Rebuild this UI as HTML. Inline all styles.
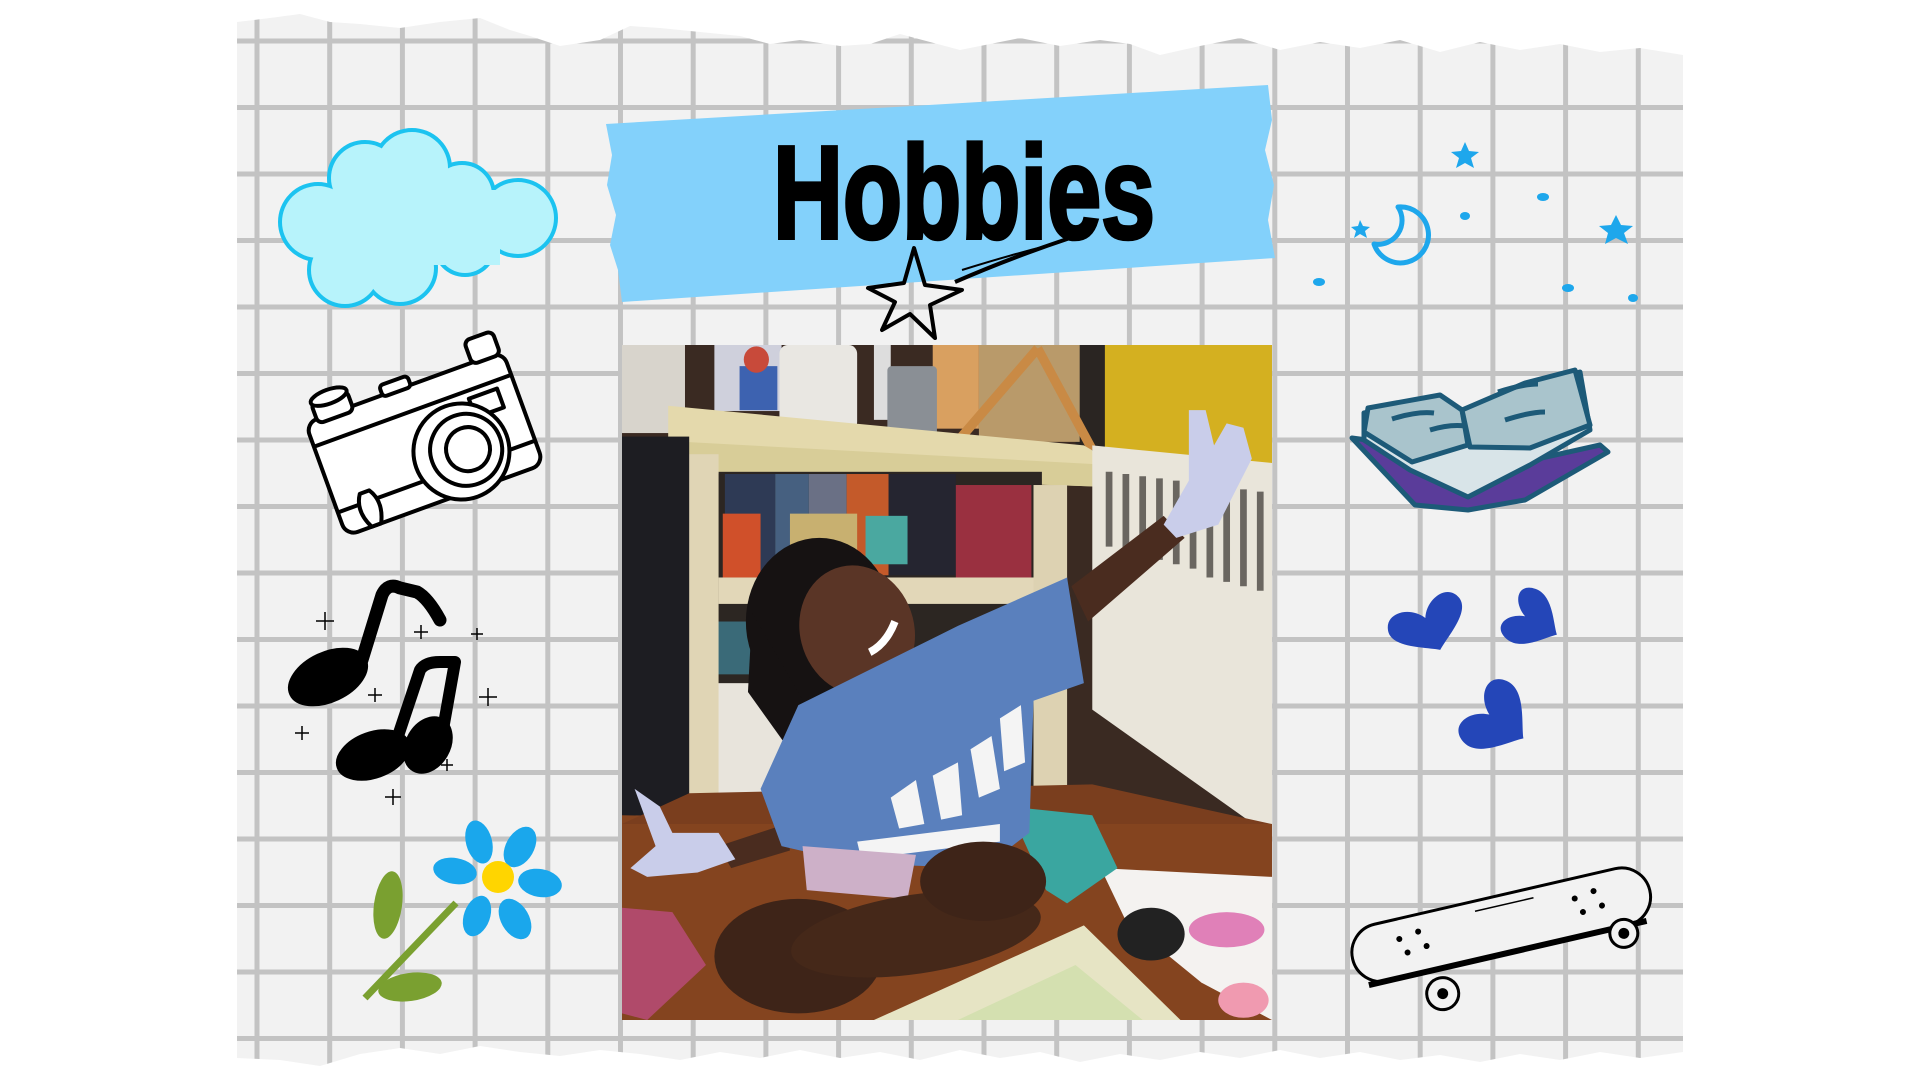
<!DOCTYPE html>
<html><head><meta charset="utf-8"><style>
html,body{margin:0;padding:0;background:#fff;width:1920px;height:1080px;overflow:hidden}
svg{position:absolute;left:0;top:0}
</style></head><body>
<svg width="1920" height="1080" viewBox="0 0 1920 1080" xmlns="http://www.w3.org/2000/svg">
<defs>
<pattern id="grid" patternUnits="userSpaceOnUse" x="254.5" y="38.5" width="72.7" height="66.5">
<rect x="0" y="0" width="5" height="66.5" fill="#c3c3c3"/>
<rect x="0" y="0" width="72.7" height="5" fill="#c3c3c3"/>
</pattern>
<path id="heart" d="M0,22 C-10,14 -38,2 -34,-14 C-30,-30 -8,-26 0,-10 C8,-26 30,-30 34,-14 C38,2 10,14 0,22 Z"/>
</defs>
<!-- paper -->
<rect x="237" y="12" width="1446" height="1060" fill="#f2f2f2"/>
<rect x="237" y="12" width="1446" height="1060" fill="url(#grid)"/>
<!-- torn top -->
<polygon fill="#fff" points="0,0 1920,0 1920,60 1683,60 1683,55 1640,48 1600,52 1560,44 1520,50 1480,42 1440,52 1400,40 1360,48 1320,42 1280,50 1240,38 1200,46 1160,55 1130,44 1100,40 1060,46 1020,38 990,44 960,50 930,42 900,34 870,44 840,46 800,40 770,44 740,36 700,32 660,28 630,26 600,40 560,46 530,36 510,30 480,18 440,22 400,28 360,24 330,22 300,14 270,18 237,22 0,22"/>
<!-- torn bottom -->
<polygon fill="#fff" points="0,1080 1920,1080 1920,1060 1683,1060 1683,1052 1640,1058 1600,1052 1560,1060 1520,1054 1480,1062 1440,1055 1400,1060 1360,1052 1320,1058 1280,1050 1240,1058 1200,1052 1160,1060 1120,1054 1080,1062 1040,1052 1000,1058 960,1050 920,1060 880,1052 840,1058 800,1050 760,1058 720,1052 680,1060 640,1054 600,1050 560,1056 520,1052 480,1046 440,1054 400,1048 360,1054 320,1066 280,1060 237,1058 0,1058"/>

<!-- banner -->
<path d="M606,124 L1268,85 L1272,120 L1265,150 L1274,185 L1268,220 L1275,258 L622,302 L618,270 L610,245 L616,215 L607,185 L612,155 Z" fill="#83d1fb"/>
<text x="773" y="238" textLength="382" lengthAdjust="spacingAndGlyphs" font-family="'Liberation Sans Narrow','Liberation Sans',sans-serif" font-weight="bold" font-size="132" fill="#000" stroke="#000" stroke-width="4">Hobbies</text>
<!-- banner star -->
<path d="M914,248 L925,285 L962,290 L930,305 L935,338 L910,314 L882,330 L895,302 L868,288 L904,283 Z" fill="none" stroke="#000" stroke-width="4" stroke-linejoin="round"/>
<path d="M955,282 Q1010,258 1070,238" stroke="#000" stroke-width="4" fill="none"/>
<path d="M962,270 Q1010,255 1050,245" stroke="#000" stroke-width="2" fill="none"/>

<!-- photo -->
<svg x="622" y="345" width="650" height="675" viewBox="0 12 1548 1533" preserveAspectRatio="none">
<rect x="0" y="0" width="1548" height="1560" fill="#3a2a22"/>
<rect x="0" y="12" width="150" height="200" fill="#d8d4cc"/>
<rect x="1140" y="12" width="408" height="280" fill="#d4b020"/>
<rect x="1080" y="12" width="70" height="260" fill="#2a2522"/>
<rect x="220" y="12" width="160" height="150" fill="#cfd0dc"/>
<rect x="280" y="60" width="90" height="100" fill="#3d62b0"/>
<circle cx="320" cy="45" r="30" fill="#c84a3a"/>
<rect x="375" y="12" width="185" height="195" rx="20" fill="#e9e7e2"/>
<rect x="600" y="12" width="40" height="170" fill="#ddd"/>
<rect x="740" y="12" width="110" height="190" fill="#d9a060"/>
<rect x="850" y="12" width="240" height="220" fill="#b99a6a"/>
<rect x="632" y="60" width="118" height="165" rx="10" fill="#8a8f95"/>
<path d="M800,230 L990,20 M990,20 L1120,250" stroke="#c98a45" stroke-width="22"/>
<polygon points="110,150 1100,240 1180,285 1180,335 110,300" fill="#e4d9ac"/>
<polygon points="110,230 1175,285 1175,335 110,300" fill="#d8cd98"/>
<rect x="230" y="300" width="770" height="780" fill="#2c2622"/>
<rect x="245" y="305" width="120" height="230" fill="#2e3a55"/>
<rect x="365" y="305" width="80" height="230" fill="#466080"/>
<rect x="445" y="305" width="90" height="230" fill="#6a7085"/>
<rect x="535" y="305" width="100" height="230" fill="#c45a2a"/>
<rect x="635" y="305" width="160" height="230" fill="#252530"/>
<rect x="795" y="330" width="180" height="230" fill="#9a3040"/>
<rect x="240" y="395" width="90" height="145" fill="#d0502a"/>
<rect x="400" y="395" width="160" height="100" fill="#c8b070"/>
<rect x="580" y="400" width="100" height="110" fill="#4aa8a0"/>
<rect x="230" y="540" width="770" height="60" fill="#e2d7b8"/>
<rect x="225" y="640" width="110" height="120" fill="#3a6a78"/>
<rect x="215" y="780" width="220" height="280" fill="#e8e4dc"/>
<rect x="110" y="260" width="120" height="860" fill="#e0d5b5"/>
<rect x="980" y="330" width="80" height="700" fill="#ddd2b2"/>
<polygon points="1120,240 1548,280 1548,1130 1120,840" fill="#e9e5da"/>
<g stroke="#6a6660" stroke-width="16">
<path d="M1160,300 V470 M1200,305 V480 M1240,310 V490 M1280,315 V500 M1320,320 V510 M1360,325 V520 M1400,330 V540 M1440,335 V550 M1480,340 V560 M1520,345 V570"/>
</g>
<rect x="0" y="220" width="160" height="880" fill="#1d1d22"/>
<polygon points="0,1080 1548,1100 1548,1545 0,1545" fill="#84441f"/>
<polygon points="160,1030 1120,1010 1548,1100 0,1100" fill="#7a3e1e"/>
<polygon points="1140,1200 1548,1220 1548,1545 1380,1460 1200,1320" fill="#f4f2f0"/>
<ellipse cx="1440" cy="1340" rx="90" ry="40" fill="#e080b8"/>
<ellipse cx="1260" cy="1350" rx="80" ry="60" fill="#222"/>
<ellipse cx="1480" cy="1500" rx="60" ry="40" fill="#f09ab0"/>
<polygon points="600,1545 1100,1330 1330,1545" fill="#e6e4c4"/>
<polygon points="800,1545 1080,1420 1240,1545" fill="#d4e0b0"/>
<polygon points="920,1060 1120,1080 1180,1200 1060,1280 1010,1250" fill="#3aa6a0"/>
<polygon points="0,1290 120,1300 200,1420 60,1545 0,1530" fill="#b04a6a"/>
<!-- girl -->
<polygon points="1070,560 1290,400 1340,450 1110,640" fill="#4a2c1f"/>
<polygon points="1290,420 1350,320 1350,160 1390,160 1410,240 1440,190 1480,200 1500,270 1420,420 1320,450" fill="#c9cdea"/>
<polygon points="230,1150 390,1100 400,1160 260,1200" fill="#4a2c1f"/>
<polygon points="30,1020 90,1060 120,1120 230,1120 270,1180 180,1210 60,1220 20,1200 80,1150" fill="#c9cdea"/>
<ellipse cx="470" cy="640" rx="175" ry="190" fill="#161212"/>
<polygon points="310,620 300,800 420,960 480,900" fill="#161212"/>
<ellipse cx="560" cy="660" rx="135" ry="150" transform="rotate(-25 560 660)" fill="#5a3526"/>
<path d="M590,710 Q630,690 650,640" stroke="#fff" stroke-width="18" fill="none"/>
<polygon points="330,1020 420,830 800,650 1060,540 1100,780 980,820 970,1120 860,1200 560,1190 380,1150" fill="#5a80bd"/>
<g fill="#f4f4f4"><polygon points="640,1040 700,1000 720,1100 660,1110"/><polygon points="740,990 800,960 810,1080 760,1090"/><polygon points="830,930 880,900 900,1020 850,1040"/><polygon points="900,860 950,830 960,960 910,980"/><polygon points="560,1140 900,1100 900,1140 570,1180"/></g>
<polygon points="430,1150 700,1170 680,1270 440,1250" fill="#cdb0c8"/>
<ellipse cx="420" cy="1400" rx="200" ry="130" fill="#3e2418"/>
<ellipse cx="700" cy="1350" rx="300" ry="90" transform="rotate(-8 700 1350)" fill="#452819"/>
<ellipse cx="860" cy="1230" rx="150" ry="90" fill="#3e2418"/>
</svg>

<!-- cloud -->
<g fill="#b7f3fb" stroke="#1cc3f0" stroke-width="8">
<circle cx="318" cy="222" r="36"/><circle cx="365" cy="178" r="34"/><circle cx="412" cy="168" r="36"/><circle cx="462" cy="195" r="30"/><circle cx="518" cy="218" r="36"/><circle cx="400" cy="268" r="34"/><circle cx="345" cy="270" r="34"/><circle cx="465" cy="245" r="28"/>
</g>
<g fill="#b7f3fb">
<circle cx="318" cy="222" r="36"/><circle cx="365" cy="178" r="34"/><circle cx="412" cy="168" r="36"/><circle cx="462" cy="195" r="30"/><circle cx="518" cy="218" r="36"/><circle cx="400" cy="268" r="34"/><circle cx="345" cy="270" r="34"/><circle cx="465" cy="245" r="28"/><rect x="330" y="190" width="170" height="75"/>
</g>

<!-- camera -->
<g transform="rotate(-20 420 440)" fill="#fff" stroke="#000" stroke-width="4" stroke-linejoin="round">
<rect x="318" y="385" width="210" height="120" rx="12"/>
<line x1="318" y1="410" x2="528" y2="410"/>
<line x1="318" y1="480" x2="528" y2="480"/>
<rect x="330" y="368" width="38" height="22" rx="6"/>
<ellipse cx="349" cy="368" rx="19" ry="7"/>
<rect x="495" y="362" width="30" height="25" rx="6"/>
<rect x="400" y="375" width="30" height="12" rx="4"/>
<rect x="480" y="418" width="30" height="20"/>
<circle cx="455" cy="465" r="48"/><circle cx="460" cy="465" r="36"/><circle cx="462" cy="465" r="22"/>
<path d="M345,470 q-10,15 0,35 h10 q10,-20 0,-35 z"/>
</g>

<!-- music notes -->
<g fill="#000" stroke="#000">
<ellipse cx="328" cy="677" rx="42" ry="25" transform="rotate(-25 328 677)"/>
<path d="M362,660 L382,595 Q388,582 400,588 L417,592 Q428,598 440,620" fill="none" stroke-width="13" stroke-linecap="round"/>
<ellipse cx="373" cy="755" rx="38" ry="23" transform="rotate(-20 373 755)"/>
<ellipse cx="428" cy="745" rx="22" ry="30" transform="rotate(30 428 745)"/>
<path d="M395,745 L420,670 Q425,662 440,662 L455,662 L442,735" fill="none" stroke-width="12" stroke-linecap="round" stroke-linejoin="round"/>
</g>
<g stroke="#000" stroke-width="1.5">
<path d="M325,612 v18 M316,621 h18"/><path d="M421,625 v14 M414,632 h14"/><path d="M477,628 v12 M471,634 h12"/><path d="M375,688 v14 M368,695 h14"/><path d="M488,688 v18 M479,697 h18"/><path d="M302,726 v14 M295,733 h14"/><path d="M447,759 v12 M441,765 h12"/><path d="M393,789 v16 M385,797 h16"/>
</g>

<!-- flower -->
<path d="M456,903 L365,998" stroke="#7aa030" stroke-width="7"/>
<ellipse cx="388" cy="905" rx="14" ry="34" transform="rotate(8 388 905)" fill="#7aa030"/>
<ellipse cx="410" cy="987" rx="32" ry="14" transform="rotate(-8 410 987)" fill="#7aa030"/>
<g fill="#1aa7ec">
<ellipse cx="479" cy="842" rx="13" ry="22" transform="rotate(-15 479 842)"/>
<ellipse cx="520" cy="847" rx="14" ry="22" transform="rotate(30 520 847)"/>
<ellipse cx="540" cy="883" rx="22" ry="14" transform="rotate(10 540 883)"/>
<ellipse cx="515" cy="919" rx="14" ry="22" transform="rotate(-30 515 919)"/>
<ellipse cx="477" cy="916" rx="13" ry="21" transform="rotate(20 477 916)"/>
<ellipse cx="455" cy="871" rx="22" ry="13" transform="rotate(10 455 871)"/>
</g>
<circle cx="498" cy="877" r="16" fill="#ffd500"/>

<!-- right: stars & moon -->
<g fill="#1ea7ec">
<path d="M1465,142 l4,9 10,1 -8,6 3,10 -9,-5 -9,5 3,-10 -8,-6 10,-1z"/>
<path d="M1360,220 l3,6 7,1 -5,4 2,7 -7,-4 -6,4 2,-7 -5,-4 7,-1z"/>
<path d="M1616,215 l5,10 12,1 -9,7 4,11 -12,-6 -11,6 3,-11 -9,-7 12,-1z"/>
<ellipse cx="1319" cy="282" rx="6" ry="4"/><ellipse cx="1465" cy="216" rx="5" ry="4"/><ellipse cx="1543" cy="197" rx="6" ry="4"/><ellipse cx="1568" cy="288" rx="6" ry="4"/><ellipse cx="1633" cy="298" rx="5" ry="4"/>
</g>
<path d="M1398,207 A28,28 0 1 1 1374,244 A24,24 0 0 0 1398,207 Z" fill="none" stroke="#1ea7ec" stroke-width="5" stroke-linejoin="round"/>

<!-- book -->
<g stroke="#1d5a78" stroke-width="5" stroke-linejoin="round">
<polygon points="1352,438 1420,447 1465,475 1510,465 1600,445 1608,452 1525,500 1468,510 1415,505" fill="#5a3c9a"/>
<polygon points="1364,413 1428,400 1465,412 1528,385 1580,372 1590,430 1530,465 1468,497 1410,470 1364,440" fill="#d8e4e8"/>
<polygon points="1368,408 1440,395 1462,410 1468,445 1412,462 1364,432" fill="#a9c4cc"/>
<polygon points="1462,410 1525,383 1575,370 1590,425 1530,448 1470,447" fill="#a9c4cc"/>
<path d="M1392,419 q25,-8 42,-6 M1430,430 q20,-6 35,-4 M1498,392 q25,-8 40,-8 M1505,420 q25,-8 40,-8" fill="none"/>
</g>

<!-- hearts -->
<g fill="#2446b8">
<use href="#heart" transform="translate(1430,628) rotate(-25) scale(1.15,1.1)"/>
<use href="#heart" transform="translate(1535,622) rotate(-60) scale(0.85,1.15)"/>
<use href="#heart" transform="translate(1500,722) rotate(-55) scale(1.1,1.3)"/>
</g>

<!-- skateboard -->
<g transform="rotate(-13 1505 930)" fill="none" stroke="#000">
<rect x="1350" y="895" width="305" height="58" rx="29" stroke-width="3" fill="#f2f2f2"/>
<path d="M1360,953 h285" stroke-width="6"/>
<circle cx="1430" cy="978" r="16" stroke-width="3" fill="#f2f2f2"/><circle cx="1430" cy="978" r="5" fill="#000"/>
<circle cx="1620" cy="960" r="14" stroke-width="3" fill="#f2f2f2"/><circle cx="1620" cy="960" r="5" fill="#000"/>
<g fill="#000" stroke="none"><circle cx="1400" cy="915" r="3"/><circle cx="1420" cy="912" r="3"/><circle cx="1405" cy="930" r="3"/><circle cx="1425" cy="928" r="3"/><circle cx="1580" cy="915" r="3"/><circle cx="1600" cy="912" r="3"/><circle cx="1585" cy="930" r="3"/><circle cx="1605" cy="928" r="3"/></g>
<path d="M1480,905 h60" stroke-width="1.5"/>
</g>
</svg>
</body></html>
